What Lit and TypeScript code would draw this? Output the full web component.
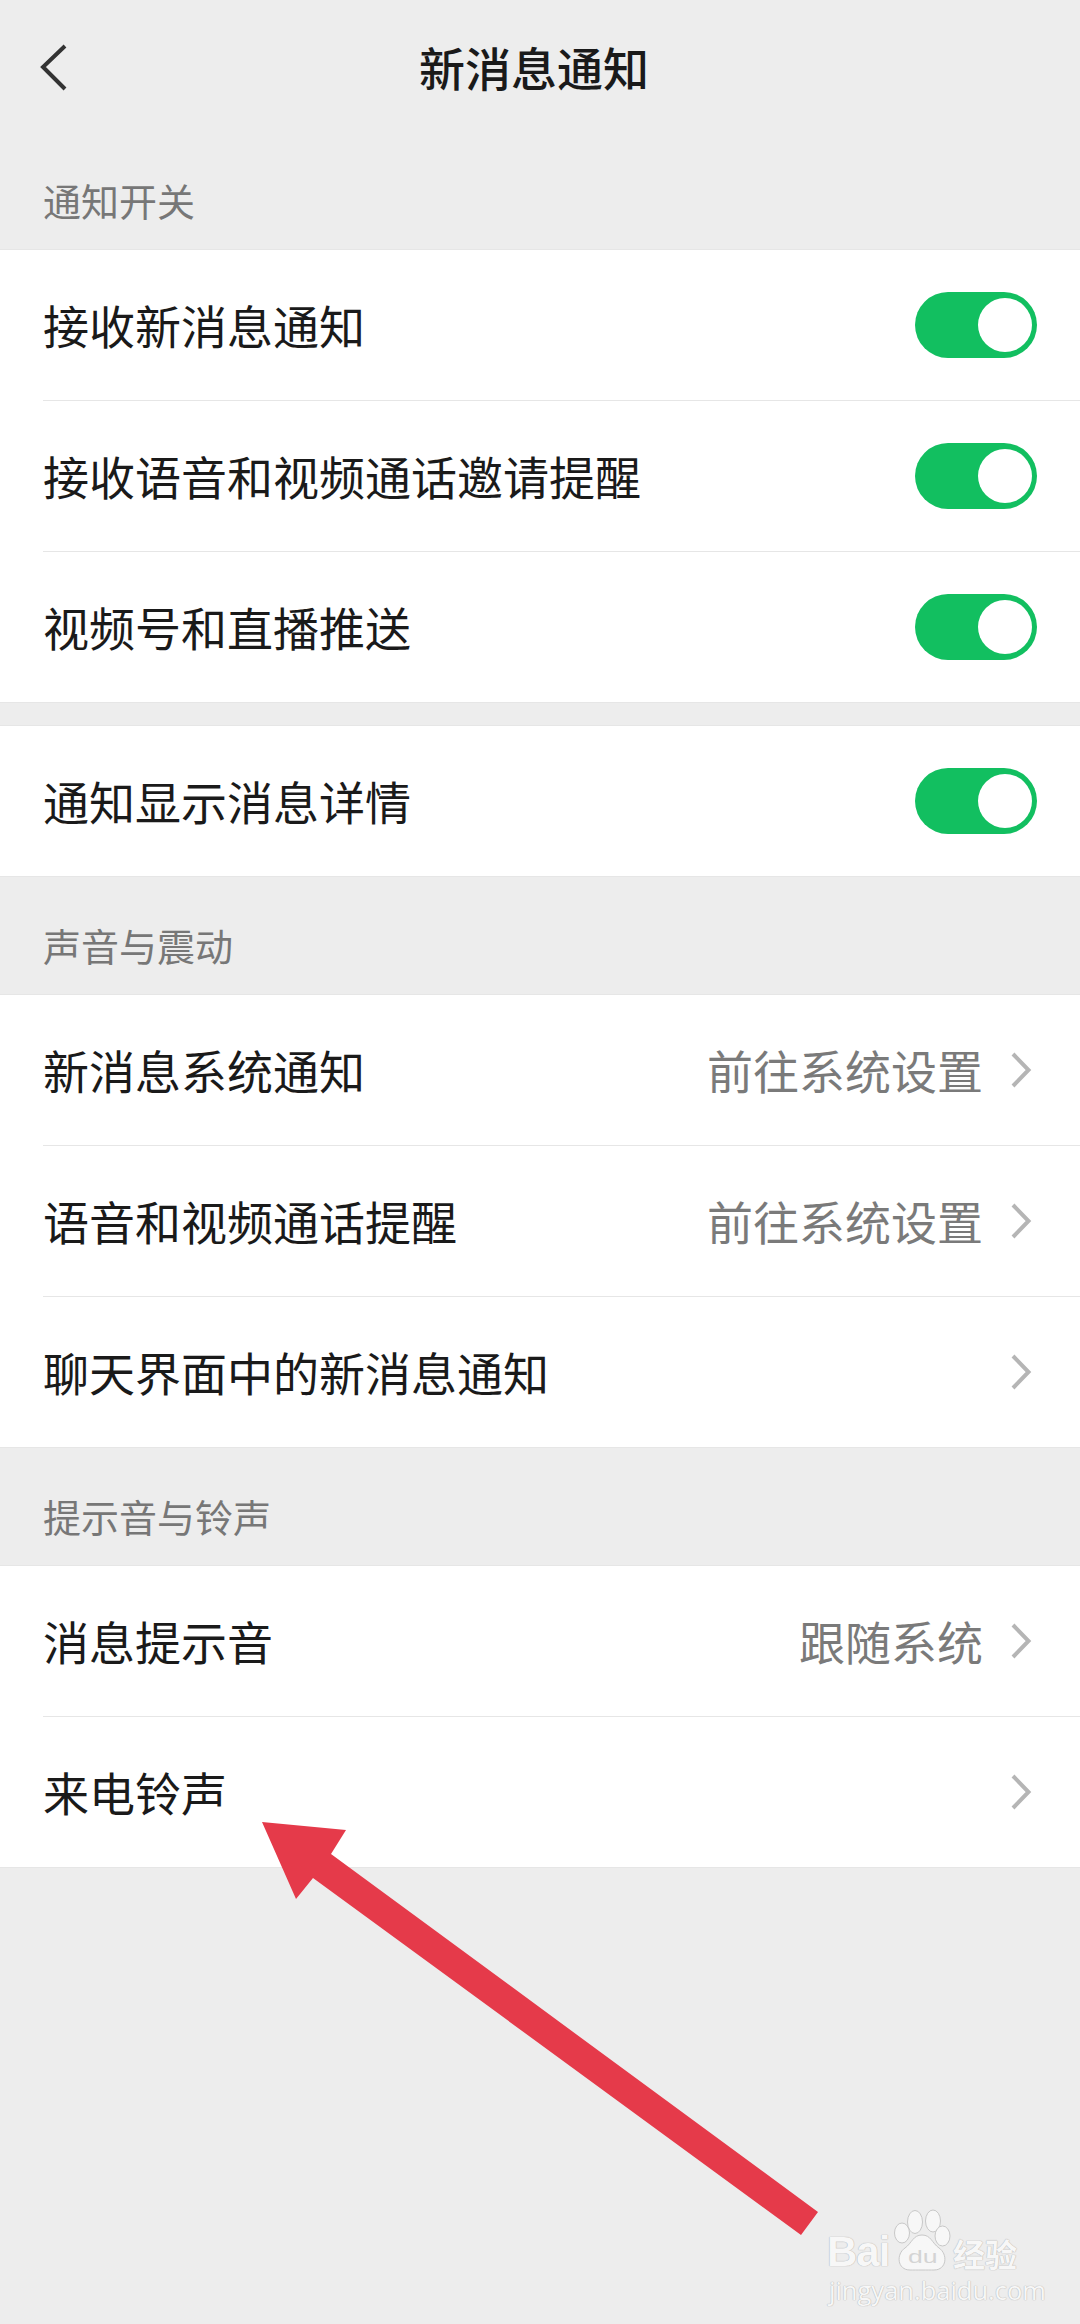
import { LitElement, html, css, svg } from "lit";
import { customElement } from "lit/decorators.js";

type Row = { label: string; value?: string; toggle?: boolean };

const GROUP_A: Row[] = [
  { label: "接收新消息通知", toggle: true },
  { label: "接收语音和视频通话邀请提醒", toggle: true },
  { label: "视频号和直播推送", toggle: true },
];
const GROUP_B: Row[] = [{ label: "通知显示消息详情", toggle: true }];
const GROUP_C: Row[] = [
  { label: "新消息系统通知", value: "前往系统设置" },
  { label: "语音和视频通话提醒", value: "前往系统设置" },
  { label: "聊天界面中的新消息通知" },
];
const GROUP_D: Row[] = [
  { label: "消息提示音", value: "跟随系统" },
  { label: "来电铃声" },
];

@customElement("app-root")
export class AppRoot extends LitElement {
  static styles = css`
    :host {
      display: block;
      width: 1080px;
      height: 2324px;
      position: relative;
      overflow: hidden;
      background: #ededed;
      font-family: "Noto Sans CJK SC", "Noto Sans", sans-serif;
    }
    .header {
      height: 132px;
      box-sizing: border-box;
      padding: 43px 12px 0 0;
      position: relative;
      display: flex;
      justify-content: center;
    }
    .title {
      font-size: 46px;
      font-weight: 500;
      color: #1a1a1a;
      line-height: 46px;
    }
    .back {
      position: absolute;
      left: 38px;
      top: 42px;
      width: 30px;
      height: 50px;
    }
    .label {
      height: 117px;
      box-sizing: border-box;
      padding: 0 0 29px 43px;
      display: flex;
      align-items: flex-end;
      font-size: 38px;
      line-height: 40px;
      color: #777;
    }
    .group {
      background: #fff;
      border-top: 1px solid #e6e6e6;
      padding-left: 43px;
    }
    .spacer { height: 22px; }
    .row {
      height: 150px;
      display: flex;
      align-items: center;
      padding-right: 43px;
      border-bottom: 1px solid #e6e6e6;
    }
    .row:last-child {
      margin-left: -43px;
      padding-left: 43px;
    }
    .text {
      flex: 1;
      font-size: 46px;
      line-height: 60px;
      padding-bottom: 3px;
      color: #1a1a1a;
      white-space: nowrap;
    }
    .value {
      font-size: 46px;
      line-height: 60px;
      padding-bottom: 3px;
      color: #7a7a7a;
      white-space: nowrap;
      margin-right: 26px;
    }
    .chev {
      width: 24px;
      height: 40px;
      margin-right: 4px;
      flex: none;
    }
    .toggle {
      width: 122px;
      height: 66px;
      border-radius: 33px;
      background: #12bf60;
      position: relative;
      flex: none;
    }
    .knob {
      position: absolute;
      right: 5px;
      top: 6px;
      width: 54px;
      height: 54px;
      border-radius: 50%;
      background: #fff;
    }
    .arrow {
      position: absolute;
      left: 0;
      top: 0;
      width: 1080px;
      height: 2324px;
      pointer-events: none;
    }
    .wm {
      position: absolute;
      left: 820px;
      top: 2200px;
      width: 220px;
      height: 110px;
      color: #f7f7f7;
      text-shadow: 0 0 1px #b5b5b5, 0 0 1px #b5b5b5;
      font-family: "Liberation Sans", sans-serif;
    }
    .wm span { position: absolute; white-space: nowrap; line-height: 1; }
    .bai { left: 7px; top: 31px; font-size: 42px; font-weight: 700; letter-spacing: -1px; }
    .du { left: 88px; top: 47px; font-size: 19px; color: #d4d4d4; text-shadow: none; transform: scaleX(1.4); transform-origin: left top; }
    .jy { left: 133px; top: 37px; font-size: 32px; font-weight: 700; font-family: "Noto Sans CJK SC", sans-serif; }
    .url { left: 9px; top: 78px; font-size: 25.5px; font-family: "Open Sans", sans-serif; }
  `;

  private renderRow(r: Row) {
    return html`<div class="row">
      <div class="text">${r.label}</div>
      ${r.toggle
        ? html`<div class="toggle"><div class="knob"></div></div>`
        : html`${r.value ? html`<div class="value">${r.value}</div>` : ""}
            <svg class="chev" viewBox="0 0 24 40">
              <path d="M4 4 L19.5 20 L4 36" fill="none" stroke="#b5b5b5" stroke-width="4" />
            </svg>`}
    </div>`;
  }

  private group(rows: Row[]) {
    return html`<div class="group">${rows.map((r) => this.renderRow(r))}</div>`;
  }

  render() {
    return html`
      <div class="header">
        <svg class="back" viewBox="0 0 30 50">
          <path d="M27 4 L5 25 L27 47" fill="none" stroke="#333" stroke-width="4" />
        </svg>
        <div class="title">新消息通知</div>
      </div>
      <div class="label">通知开关</div>
      ${this.group(GROUP_A)}
      <div class="spacer"></div>
      ${this.group(GROUP_B)}
      <div class="label">声音与震动</div>
      ${this.group(GROUP_C)}
      <div class="label">提示音与铃声</div>
      ${this.group(GROUP_D)}

      <svg class="arrow" viewBox="0 0 1080 2324">
        ${svg`<polygon fill="#e53a4a" points="262,1822 346,1830 331,1854 818,2212 801,2235 313,1878 296,1899" />`}
      </svg>

      <div class="wm">
        <svg style="position:absolute;left:0;top:0" width="220" height="110" viewBox="0 0 220 110">
          <g fill="#f7f7f7" stroke="#c8c8c8" stroke-width="1">
            <ellipse cx="82" cy="33" rx="7.5" ry="10" />
            <ellipse cx="95" cy="22" rx="7.5" ry="11.5" />
            <ellipse cx="113" cy="21" rx="7.5" ry="11" />
            <ellipse cx="122.5" cy="36" rx="7.5" ry="10" />
            <path d="M102 35 C93 35 92 43 85 48 C76 54 77 70 90 70 C96 70 108 70 114 70 C127 70 128 54 119 48 C112 43 111 35 102 35 Z" />
          </g>
        </svg>
        <span class="bai">Bai</span>
        <span class="du">du</span>
        <span class="jy">经验</span>
        <span class="url">jingyan.baidu.com</span>
      </div>
    `;
  }
}
